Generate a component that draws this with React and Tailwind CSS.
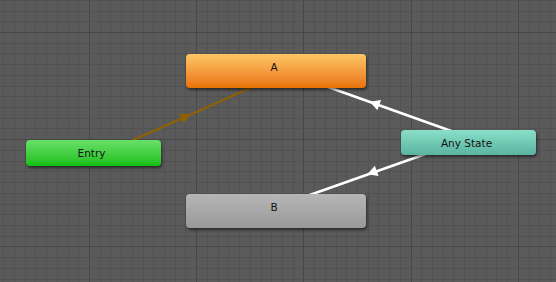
import React from "react";

const W = 556;
const H = 282;
const STEP = 10.72;
const OX = 89;
const OY = 32;

function gridLines(offset, max) {
  const out = [];
  let start = offset;
  while (start - STEP > -1) start -= STEP;
  let k = Math.round((start - offset) / STEP);
  for (let v = start; v < max + 1; v += STEP, k++) {
    out.push({ pos: Math.round(v) + 0.5, major: ((k % 10) + 10) % 10 === 0 });
  }
  return out;
}

function Arrow({ x1, y1, x2, y2, cx, cy, color, len = 10, hw = 5.5 }) {
  const dx = x2 - x1;
  const dy = y2 - y1;
  const d = Math.hypot(dx, dy);
  const ux = dx / d;
  const uy = dy / d;
  const px = -uy;
  const py = ux;
  const tip = [cx + (ux * len) / 2, cy + (uy * len) / 2];
  const bx = cx - (ux * len) / 2;
  const by = cy - (uy * len) / 2;
  const pts = `${tip[0]},${tip[1]} ${bx + px * hw},${by + py * hw} ${bx - px * hw},${by - py * hw}`;
  return <polygon points={pts} fill={color} />;
}

function Canvas() {
  const vx = gridLines(OX, W);
  const hy = gridLines(OY, H);
  return (
    <svg width={W} height={H} className="absolute inset-0 block">
      {vx.map((l, i) => (
        <line key={"v" + i} x1={l.pos} y1={0} x2={l.pos} y2={H} stroke={l.major ? "#474747" : "#525252"} strokeWidth="1" />
      ))}
      {hy.map((l, i) => (
        <line key={"h" + i} x1={0} y1={l.pos} x2={W} y2={l.pos} stroke={l.major ? "#474747" : "#525252"} strokeWidth="1" />
      ))}
      {/* Entry -> A */}
      <line x1={95} y1={157} x2={276} y2={76.5} stroke="#8f6100" strokeWidth="2.2" />
      <Arrow x1={133} y1={140} x2={250} y2={88} cx={186} cy={116.5} color="#8f6100" />
      {/* Any State -> A */}
      <line x1={468} y1={137} x2={300} y2={77} stroke="#ffffff" strokeWidth="2.6" />
      <Arrow x1={448} y1={130} x2={333} y2={89} cx={374.5} cy={103.5} color="#ffffff" />
      {/* Any State -> B */}
      <line x1={468} y1={139} x2={290} y2={202} stroke="#ffffff" strokeWidth="2.6" />
      <Arrow x1={420} y1={156} x2={310} y2={195} cx={372} cy={172.5} color="#ffffff" />
    </svg>
  );
}

function Node({ className, label }) {
  return (
    <div
      className={
        "absolute rounded-[4px] pt-[6px] pr-[4px] text-center text-[10.5px] leading-[14px] text-[#111] shadow-[1px_2px_3px_rgba(0,0,0,0.55)] " +
        className
      }
      style={{ fontFamily: '"DejaVu Sans", Verdana, sans-serif' }}
    >
      {label}
    </div>
  );
}

export default function App() {
  return (
    <div className="relative h-[282px] w-[556px] overflow-hidden bg-[#5a5a5a]">
      <Canvas />
      <Node
        label="A"
        className="left-[186px] top-[54px] h-[34px] w-[180px] bg-linear-to-b from-[#fec765] to-[#e87100]"
      />
      <Node
        label="Entry"
        className="left-[26px] top-[140px] h-[26px] w-[135px] bg-linear-to-b from-[#68e068] to-[#0abf0a]"
      />
      <Node
        label="Any State"
        className="left-[401px] top-[130px] h-[25px] w-[135px] bg-linear-to-b from-[#8adfc8] to-[#59b4a1]"
      />
      <Node
        label="B"
        className="left-[186px] top-[194px] h-[34px] w-[180px] bg-linear-to-b from-[#b6b6b6] to-[#999999]"
      />
    </div>
  );
}
